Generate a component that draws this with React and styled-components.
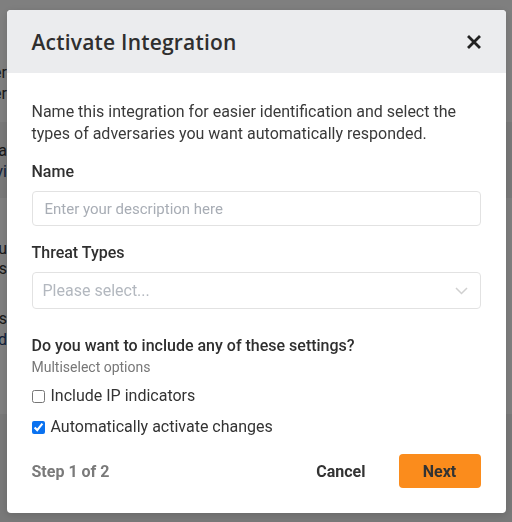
import React, { useState } from 'react';
import styled, { createGlobalStyle } from 'styled-components';

const GlobalStyle = createGlobalStyle`
  html, body {
    margin: 0;
    padding: 0;
    background: #ffffff;
    font-family: Roboto, "Liberation Sans", sans-serif;
  }
  * {
    box-sizing: border-box;
  }
`;

// page behind the dialog, mostly hidden
const Page = styled.div`
  width: 512px;
  height: 522px;
  overflow: hidden;
  display: flex;
  flex-direction: column;
  background: #ffffff;
`;

const PageSection = styled.div`
  display: flex;
  flex-direction: column;
  height: ${(p) => p.h}px;
  padding-top: ${(p) => p.pt || 0}px;
  background: ${(p) => p.bg || '#ffffff'};
`;

const PageLine = styled.div`
  width: 7px;
  height: 21px;
  overflow: hidden;
  display: flex;
  justify-content: flex-end;
  white-space: nowrap;
  font-size: 16px;
  line-height: 21px;
  color: ${(p) => (p.link ? '#1d3f73' : '#333')};
`;

const Overlay = styled.div`
  position: fixed;
  inset: 0;
  background: rgba(0, 0, 0, 0.5);
  display: flex;
  justify-content: center;
  align-items: flex-start;
  padding-top: 10px;
`;

const Modal = styled.div`
  width: 499px;
  height: 503px;
  background: #ffffff;
  border-radius: 4px;
  overflow: hidden;
  display: flex;
  flex-direction: column;
  box-shadow: 0 2px 8px rgba(0, 0, 0, 0.15);
`;

const Header = styled.div`
  height: 63px;
  flex-shrink: 0;
  background: #ebecee;
  display: flex;
  align-items: center;
  justify-content: space-between;
  padding: 0 22px 0 25px;
`;

const Title = styled.h2`
  margin: 0;
  font-family: "Open Sans", Roboto, sans-serif;
  font-weight: 600;
  font-size: 21px;
  color: #2f2f2f;
  letter-spacing: 0.2px;
`;

const CloseButton = styled.button`
  border: none;
  background: none;
  padding: 0;
  width: 20px;
  height: 20px;
  display: flex;
  align-items: center;
  justify-content: center;
  cursor: pointer;
`;

const Body = styled.div`
  flex: 1;
  display: flex;
  flex-direction: column;
  padding: 28px 25px 25px;
`;

const Intro = styled.p`
  margin: 0 0 17px;
  font-size: 16px;
  line-height: 22px;
  color: #3a3a3a;
`;

const Label = styled.label`
  font-size: 16px;
  font-weight: 500;
  color: #2f2f2f;
  line-height: 20px;
  margin-bottom: ${(p) => (p.mb !== undefined ? p.mb : 9)}px;
`;

const TextInput = styled.input`
  height: 35px;
  flex-shrink: 0;
  border: 1px solid #e2e2e2;
  border-radius: 4px;
  padding: 0 12px;
  font-family: Roboto, sans-serif;
  font-size: 15px;
  color: #333;
  margin-bottom: 17px;
  outline: none;
  &::placeholder {
    color: #a8adb5;
  }
`;

const Select = styled.div`
  height: 37px;
  flex-shrink: 0;
  border: 1px solid #e2e2e2;
  border-radius: 4px;
  padding: 0 12px 0 10px;
  display: flex;
  align-items: center;
  justify-content: space-between;
  font-size: 16px;
  color: #b3b8bf;
  margin-bottom: 27px;
`;

const Hint = styled.div`
  font-size: 14px;
  color: #777;
  line-height: 18px;
  margin: 2px 0 10px;
`;

const CheckRow = styled.label`
  display: flex;
  align-items: center;
  gap: 6px;
  font-size: 16px;
  color: #333;
  line-height: 20px;
  margin-bottom: 11px;
  input {
    margin: 0;
    width: 13px;
    height: 13px;
    accent-color: #0a72f0;
  }
`;

const Footer = styled.div`
  margin-top: auto;
  display: flex;
  align-items: center;
  justify-content: space-between;
`;

const Step = styled.span`
  font-size: 16px;
  font-weight: 700;
  color: #7a7a7a;
`;

const Actions = styled.div`
  display: flex;
  align-items: center;
  gap: 21px;
`;

const Button = styled.button`
  height: 34px;
  min-width: ${(p) => (p.primary ? '82px' : '60px')};
  border: none;
  border-radius: 4px;
  padding: 0 12px;
  font-family: Roboto, sans-serif;
  font-size: 16px;
  font-weight: 700;
  color: #333;
  background: ${(p) => (p.primary ? '#fb8c1c' : 'transparent')};
  cursor: pointer;
`;

const bgLines = [
  { h: 62 },
  { h: 60, lines: [{ t: 'Transfer' }, { t: 'Number' }] },
  { h: 76, bg: '#f3f3f3', pt: 18, lines: [{ t: 'Data' }, { t: 'Previ', link: true }] },
  { h: 80, pt: 40, lines: [{ t: 'You' }, { t: 'Issues' }] },
  { h: 136, pt: 30, lines: [{ t: 'Rules' }, { t: 'Add', link: true }] },
  { h: 108, bg: '#f3f3f3' },
];

export default function App() {
  const [ip, setIp] = useState(false);
  const [auto, setAuto] = useState(true);

  return (
    <>
      <GlobalStyle />
      <Page>
        {bgLines.map((s, i) => (
          <PageSection key={i} h={s.h} bg={s.bg} pt={s.pt}>
            {(s.lines || []).map((l, j) => (
              <PageLine key={j} link={l.link}>
                {l.t}
              </PageLine>
            ))}
          </PageSection>
        ))}
      </Page>
      <Overlay>
        <Modal>
          <Header>
            <Title>Activate Integration</Title>
            <CloseButton aria-label="Close">
              <svg width="14" height="14" viewBox="0 0 14 14">
                <path d="M2 2 L12 12 M12 2 L2 12" stroke="#222" strokeWidth="2.8" strokeLinecap="square" />
              </svg>
            </CloseButton>
          </Header>
          <Body>
            <Intro>
              Name this integration for easier identification and select the types of adversaries you want
              automatically responded.
            </Intro>
            <Label>Name</Label>
            <TextInput placeholder="Enter your description here" />
            <Label>Threat Types</Label>
            <Select>
              <span>Please select...</span>
              <svg width="13" height="8" viewBox="0 0 13 8">
                <path d="M1 1 L6.5 6.5 L12 1" fill="none" stroke="#d0d0d0" strokeWidth="1.5" />
              </svg>
            </Select>
            <Label mb={0}>Do you want to include any of these settings?</Label>
            <Hint>Multiselect options</Hint>
            <CheckRow>
              <input type="checkbox" checked={ip} onChange={(e) => setIp(e.target.checked)} />
              Include IP indicators
            </CheckRow>
            <CheckRow>
              <input type="checkbox" checked={auto} onChange={(e) => setAuto(e.target.checked)} />
              Automatically activate changes
            </CheckRow>
            <Footer>
              <Step>Step 1 of 2</Step>
              <Actions>
                <Button>Cancel</Button>
                <Button primary>Next</Button>
              </Actions>
            </Footer>
          </Body>
        </Modal>
      </Overlay>
    </>
  );
}
